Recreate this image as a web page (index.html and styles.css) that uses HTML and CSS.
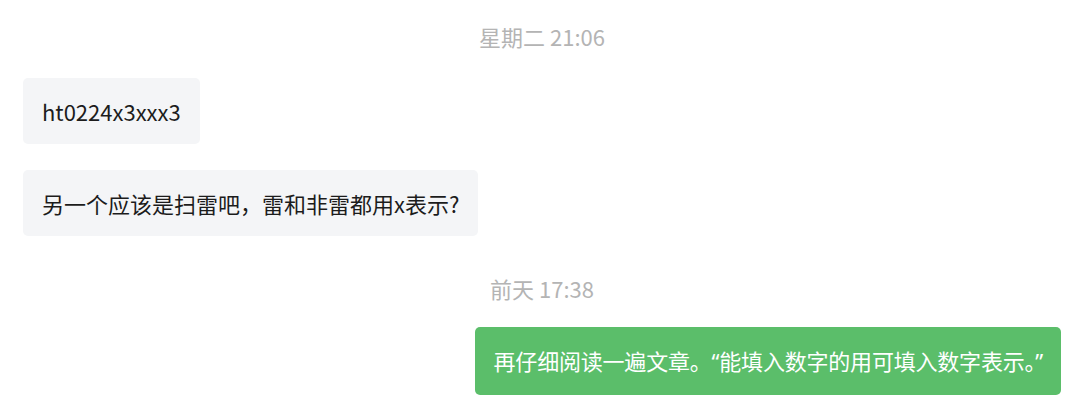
FILE: index.html
```html
<!DOCTYPE html>
<html lang="zh-CN">
<head>
    <meta charset="UTF-8">
    <meta name="viewport" content="width=device-width, initial-scale=1.0">
    <title>聊天记录</title>
    <link rel="stylesheet" href="styles.css">
</head>
<body>
    <div class="chat">
        <div class="time">星期二 21:06</div>
        <div class="row left">
            <div class="bubble">ht0224x3xxx3</div>
        </div>
        <div class="row left">
            <div class="bubble">另一个应该是扫雷吧，雷和非雷都用x表示?</div>
        </div>
        <div class="time second">前天 17:38</div>
        <div class="row right">
            <div class="bubble mine">再仔细阅读一遍文章。<span class="q">“</span>能填入数字的用可填入数字表示。<span class="q">”</span></div>
        </div>
    </div>
</body>
</html>
```

FILE: styles.css
```css
body{
    margin: 0;
    background-color: #ffffff;
    font-family: "Noto Sans CJK SC", "Noto Sans", sans-serif;
}
.chat{
    display: flex;
    flex-direction: column;
    padding: 21px 19px 0 23px;
}
.time{
    text-align: center;
    font-size: 22px;
    line-height: 30px;
    color: #b4b4b4;
    margin-bottom: 27px;
}
.time.second{
    margin-top: 37px;
    margin-bottom: 24px;
}
.row{
    display: flex;
}
.row + .row{
    margin-top: 26px;
}
.row.left{
    justify-content: flex-start;
}
.row.right{
    justify-content: flex-end;
}
.bubble{
    background-color: #f4f5f7;
    color: #1c1c1c;
    font-size: 22px;
    line-height: 30px;
    padding: 18px 19px;
    border-radius: 5px;
}
.bubble.mine{
    background-color: #5bbe6a;
    color: #ffffff;
    padding: 18px 18px 19px 19px;
    letter-spacing: -0.2px;
}
.q{
    font-family: "Noto Sans", sans-serif;
}
```
